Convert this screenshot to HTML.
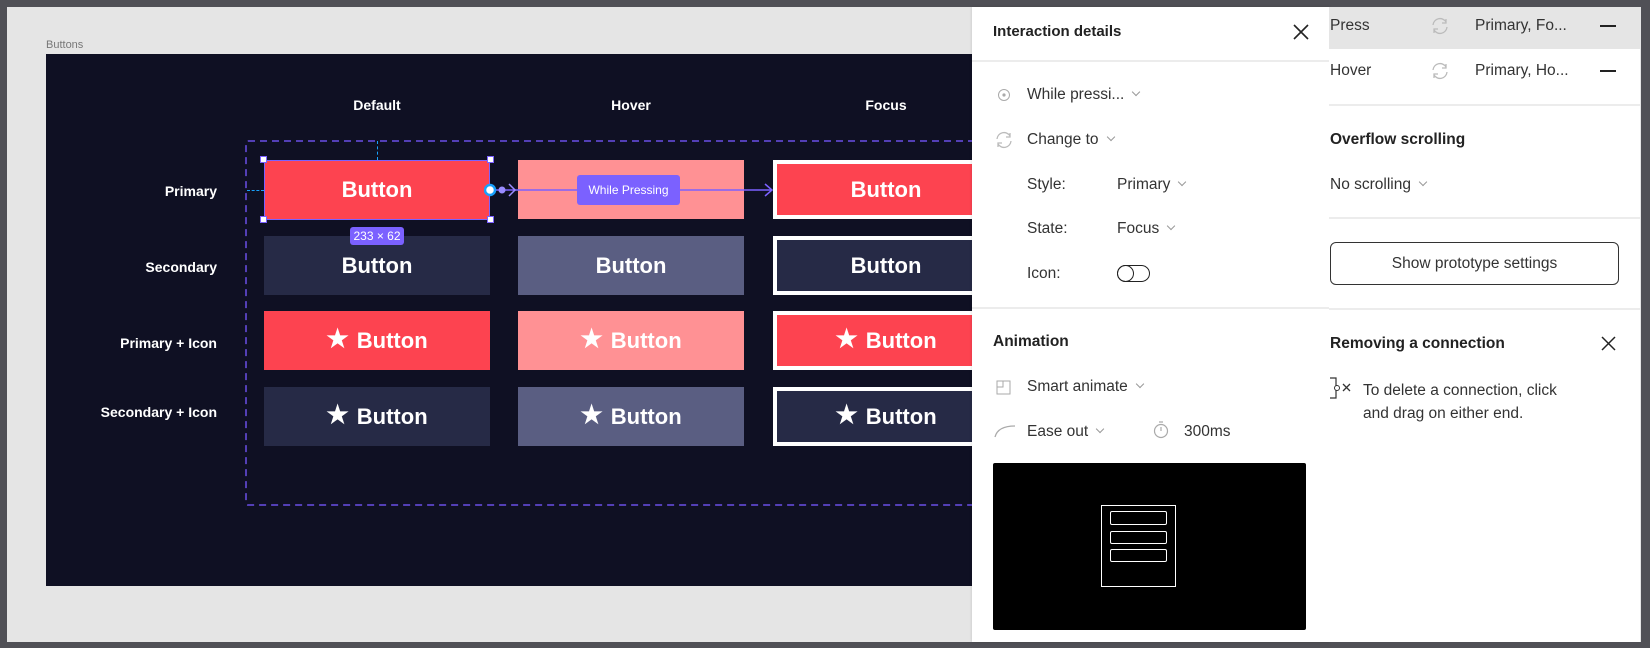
<!DOCTYPE html>
<html><head><meta charset="utf-8"><style>
*{margin:0;padding:0;box-sizing:border-box}
body{width:1650px;height:648px;background:#505056;position:relative;overflow:hidden;font-family:"Liberation Sans",sans-serif}
.abs{position:absolute}
#canvas{left:7px;top:7px;width:1634px;height:635px;background:#e5e5e5}
#frame{left:46px;top:54px;width:926px;height:532px;background:#0f1023}
.hd{color:#fff;font-weight:bold;font-size:14px;transform:translateX(-50%)}
.rl{color:#fff;font-weight:bold;font-size:14px;right:1433px;text-align:right;white-space:nowrap}
.b{width:226px;height:59px;color:#fff;font-weight:bold;font-size:22px;display:flex;align-items:center;justify-content:center;gap:8px}
.b span{font-size:25px;line-height:1;position:relative;top:-1px}
.p{background:#fd4350}.ph{background:#ff9194}.s{background:#262a46}.sh{background:#5a5e82}
.f{border:4px solid #fff;outline:0}
.t{color:#333;font-size:15.5px;white-space:nowrap}
.chev{display:inline-block;width:6px;height:6px;border-right:1px solid #999;border-bottom:1px solid #999;transform:rotate(45deg);margin-left:9px;position:relative;top:-4px}
.hr{height:2px;background:#ececec}
</style></head><body>
<div id="canvas" class="abs"></div>
<div class="abs" style="left:46px;top:39px;font-size:11px;color:#777">Buttons</div>
<div id="frame" class="abs"></div>
<div class="abs hd" style="left:377px;top:97px">Default</div>
<div class="abs hd" style="left:631px;top:97px">Hover</div>
<div class="abs hd" style="left:886px;top:97px">Focus</div>
<div class="abs rl" style="top:183px">Primary</div>
<div class="abs rl" style="top:259px">Secondary</div>
<div class="abs rl" style="top:335px">Primary + Icon</div>
<div class="abs rl" style="top:404px">Secondary + Icon</div>
<svg class="abs" style="left:244px;top:139px" width="740" height="370"><rect x="2" y="2" width="760" height="364" fill="none" stroke="#6a4fe8" stroke-width="1.5" stroke-dasharray="7 5" rx="2"/></svg>
<div class="abs" style="left:377px;top:141px;height:19px;border-left:1px dashed #18a0fb"></div>
<div class="abs" style="left:247px;top:190px;width:17px;border-top:1px dashed #18a0fb"></div>
<div class="abs b p" style="left:264px;top:160px">Button</div>
<div class="abs b ph" style="left:518px;top:160px"></div>
<div class="abs b p f" style="left:773px;top:160px">Button</div>
<div class="abs b s" style="left:264px;top:236px">Button</div>
<div class="abs b sh" style="left:518px;top:236px">Button</div>
<div class="abs b s f" style="left:773px;top:236px">Button</div>
<div class="abs b p" style="left:264px;top:311px"><span>★</span>Button</div>
<div class="abs b ph" style="left:518px;top:311px"><span>★</span>Button</div>
<div class="abs b p f" style="left:773px;top:311px"><span>★</span>Button</div>
<div class="abs b s" style="left:264px;top:387px"><span>★</span>Button</div>
<div class="abs b sh" style="left:518px;top:387px"><span>★</span>Button</div>
<div class="abs b s f" style="left:773px;top:387px"><span>★</span>Button</div>
<div class="abs" style="left:264px;top:160px;width:226px;height:60px;border:1px solid #7b61ff"></div>
<div class="abs" style="left:260px;top:156px;width:7px;height:7px;background:#fff;border:1px solid #7b61ff"></div>
<div class="abs" style="left:487px;top:156px;width:7px;height:7px;background:#fff;border:1px solid #7b61ff"></div>
<div class="abs" style="left:260px;top:216px;width:7px;height:7px;background:#fff;border:1px solid #7b61ff"></div>
<div class="abs" style="left:487px;top:216px;width:7px;height:7px;background:#fff;border:1px solid #7b61ff"></div>
<div class="abs" style="left:350px;top:227px;width:54px;height:18px;background:#7b61ff;border-radius:3px;color:#fff;font-size:12px;text-align:center;line-height:18px">233 × 62</div>
<svg class="abs" style="left:484px;top:180px" width="295" height="20">
<line x1="8" y1="10" x2="288" y2="10" stroke="#7b61ff" stroke-width="1.5"/>
<circle cx="6" cy="10" r="5" fill="#fff" stroke="#18a0fb" stroke-width="2.5"/>
<circle cx="18" cy="10" r="3.5" fill="#9a8cff"/>
<path d="M25 4 L31 10 L25 16" fill="none" stroke="#9a8cff" stroke-width="1.5"/>
<path d="M281 4 L288 10 L281 16" fill="none" stroke="#7b61ff" stroke-width="1.5"/>
</svg>
<div class="abs" style="left:577px;top:175px;width:103px;height:30px;background:#7b61ff;border-radius:3px;color:#fff;font-size:12px;text-align:center;line-height:30px">While Pressing</div>

<div class="abs" style="left:972px;top:7px;width:357px;height:635px;background:#fff;box-shadow:0 0 3px rgba(0,0,0,.15)"></div>
<div class="abs t" style="left:993px;top:23px;font-weight:bold;font-size:15px;color:#222">Interaction details</div>
<svg class="abs" style="left:1293px;top:24px" width="16" height="16"><path d="M1 1L15 15M15 1L1 15" stroke="#222" stroke-width="1.6"/></svg>
<div class="abs hr" style="left:972px;top:60px;width:357px"></div>
<svg class="abs" style="left:997px;top:88px" width="14" height="14"><circle cx="7" cy="7" r="5.5" fill="none" stroke="#aaa"/><circle cx="7" cy="7" r="1.6" fill="#aaa"/></svg>
<div class="abs t" style="left:1027px;top:86px">While pressi...<span class="chev"></span></div>
<svg class="abs" style="left:994px;top:130px" width="20" height="20"><path d="M3 9a7 7 0 0 1 13-3M16 3v4h-4M17 11a7 7 0 0 1-13 3M4 17v-4h4" fill="none" stroke="#bbb" stroke-width="1.3"/></svg>
<div class="abs t" style="left:1027px;top:131px">Change to<span class="chev"></span></div>
<div class="abs t" style="left:1027px;top:176px">Style:</div>
<div class="abs t" style="left:1117px;top:176px">Primary<span class="chev"></span></div>
<div class="abs t" style="left:1027px;top:220px">State:</div>
<div class="abs t" style="left:1117px;top:220px">Focus<span class="chev"></span></div>
<div class="abs t" style="left:1027px;top:265px">Icon:</div>
<div class="abs" style="left:1117px;top:265px;width:33px;height:17px;border:1.5px solid #222;border-radius:9px"></div>
<div class="abs" style="left:1117px;top:265px;width:17px;height:17px;border:1.5px solid #222;border-radius:50%"></div>
<div class="abs hr" style="left:972px;top:307px;width:357px"></div>
<div class="abs t" style="left:993px;top:333px;font-weight:bold;color:#222">Animation</div>
<svg class="abs" style="left:996px;top:380px" width="15" height="15"><rect x="1" y="1" width="13" height="13" fill="none" stroke="#aaa"/><path d="M1 7h6V1" fill="none" stroke="#aaa"/></svg>
<div class="abs t" style="left:1027px;top:378px">Smart animate<span class="chev"></span></div>
<svg class="abs" style="left:994px;top:424px" width="22" height="14"><path d="M1 13C3 5 10 2 21 2" fill="none" stroke="#aaa" stroke-width="1.3"/></svg>
<div class="abs t" style="left:1027px;top:423px">Ease out<span class="chev"></span></div>
<svg class="abs" style="left:1153px;top:421px" width="16" height="18"><circle cx="8" cy="10" r="6.5" fill="none" stroke="#aaa" stroke-width="1.2"/><path d="M6 1h4M8 10V6" stroke="#aaa" stroke-width="1.2"/></svg>
<div class="abs t" style="left:1184px;top:423px">300ms</div>
<div class="abs" style="left:993px;top:463px;width:313px;height:167px;background:#000;border-radius:2px"></div>
<div class="abs" style="left:1101px;top:505px;width:75px;height:82px;border:1.5px solid #fff"></div>
<div class="abs" style="left:1110px;top:511px;width:57px;height:14px;border:1.5px solid #fff;border-radius:2px"></div>
<div class="abs" style="left:1110px;top:531px;width:57px;height:13px;border:1.5px solid #fff;border-radius:2px"></div>
<div class="abs" style="left:1110px;top:549px;width:57px;height:13px;border:1.5px solid #fff;border-radius:2px"></div>

<div class="abs" style="left:1329px;top:7px;width:311px;height:635px;background:#fff"></div>
<div class="abs" style="left:1329px;top:7px;width:311px;height:42px;background:#e5e5e5"></div>
<div class="abs t" style="left:1330px;top:17px">Press</div>
<div class="abs t" style="left:1475px;top:17px">Primary, Fo...</div>
<div class="abs t" style="left:1330px;top:62px">Hover</div>
<div class="abs t" style="left:1475px;top:62px">Primary, Ho...</div>
<svg class="abs" style="left:1430px;top:16px" width="20" height="20"><path d="M3 9a7 7 0 0 1 13-3M16 3v4h-4M17 11a7 7 0 0 1-13 3M4 17v-4h4" fill="none" stroke="#bbb" stroke-width="1.3"/></svg>
<svg class="abs" style="left:1430px;top:61px" width="20" height="20"><path d="M3 9a7 7 0 0 1 13-3M16 3v4h-4M17 11a7 7 0 0 1-13 3M4 17v-4h4" fill="none" stroke="#bbb" stroke-width="1.3"/></svg>
<div class="abs" style="left:1600px;top:25px;width:16px;height:1.5px;background:#222"></div>
<div class="abs" style="left:1600px;top:70px;width:16px;height:1.5px;background:#222"></div>
<div class="abs hr" style="left:1329px;top:104px;width:311px"></div>
<div class="abs t" style="left:1330px;top:131px;font-weight:bold;color:#222">Overflow scrolling</div>
<div class="abs t" style="left:1330px;top:176px">No scrolling<span class="chev"></span></div>
<div class="abs hr" style="left:1329px;top:217px;width:311px"></div>
<div class="abs" style="left:1330px;top:242px;width:289px;height:43px;border:1.3px solid #333;border-radius:6px;text-align:center;line-height:41px;font-size:15.5px;color:#333">Show prototype settings</div>
<div class="abs hr" style="left:1329px;top:308px;width:311px"></div>
<div class="abs t" style="left:1330px;top:335px;font-weight:bold;color:#222">Removing a connection</div>
<svg class="abs" style="left:1601px;top:336px" width="15" height="15"><path d="M1 1L14 14M14 1L1 14" stroke="#222" stroke-width="1.5"/></svg>
<svg class="abs" style="left:1329px;top:377px" width="26" height="24"><path d="M1 1h6v20H1" fill="none" stroke="#333" stroke-width="1.2"/><circle cx="8" cy="11" r="2.5" fill="#fff" stroke="#333"/><path d="M14 7l7 7M21 7l-7 7" stroke="#333" stroke-width="1.3"/></svg>
<div class="abs t" style="left:1363px;top:379px;line-height:23px">To delete a connection, click<br>and drag on either end.</div>
</body></html>
